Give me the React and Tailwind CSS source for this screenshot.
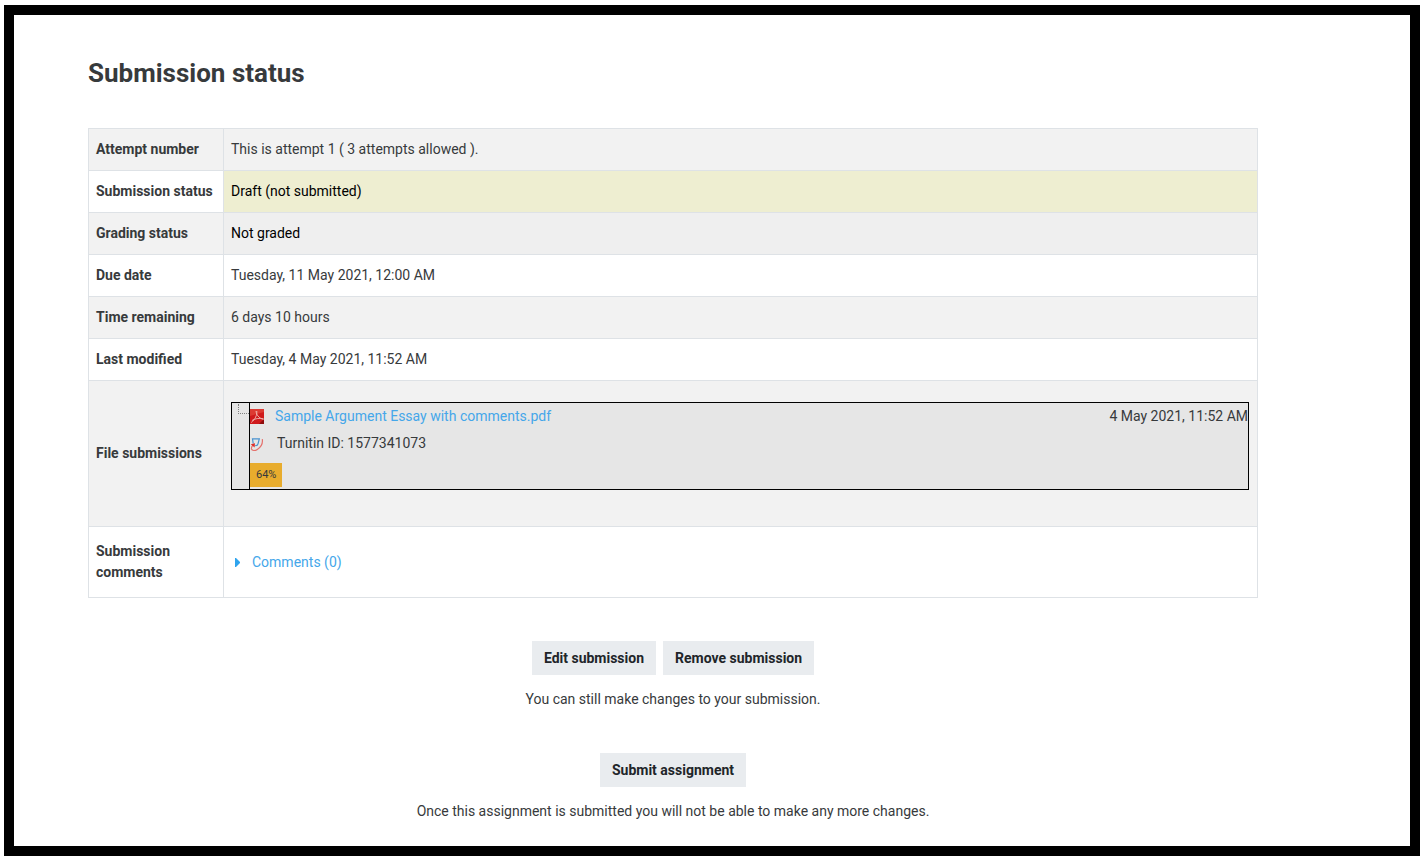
import React, { useState } from 'react';

const rows = [
    { label: 'Attempt number', value: 'This is attempt 1 ( 3 attempts allowed ).' },
    { label: 'Submission status', value: 'Draft (not submitted)', cell: 'bg-[#eeeed1] text-black' },
    { label: 'Grading status', value: 'Not graded', cell: 'bg-[#efefef] text-black' },
    { label: 'Due date', value: 'Tuesday, 11 May 2021, 12:00 AM' },
    { label: 'Time remaining', value: '6 days 10 hours' },
    { label: 'Last modified', value: 'Tuesday, 4 May 2021, 11:52 AM' },
];

const PdfIcon = () => (
    <svg className="h-4 w-4 shrink-0" viewBox="0 0 16 16" aria-hidden="true">
        <rect x="0" y="0" width="14" height="15" fill="#cf1a1c" />
        <path d="M0 0h14v3L0 7z" fill="#dc3a32" />
        <path d="M9 15l5-5v5z" fill="#8e0c0c" />
        <path d="M6 2c.3 3.500 2.500 7 7.500 8.500M6.800 2c.4 4-1.600 8.500-5.600 11.500M2 11.500c3-2 7-2.500 11.500-1.800" fill="none" stroke="#f0b5b0" strokeWidth="0.9" />
    </svg>
);

const TurnitinIcon = () => (
    <svg className="h-4 w-4 shrink-0" viewBox="0 0 16 16" aria-hidden="true">
        <path d="M3.200 7.500L2.500 2.800h6.800L8 7.800C7.600 9.300 6.800 9.800 5.200 9.500" fill="none" stroke="#4a93cf" strokeWidth="1.200" />
        <path d="M12.300 3.200c.6 4-1.200 7.800-5 10.200C5 15 2 14.800 1.500 13 1.200 11.700 2 10 3.300 8.800" fill="none" stroke="#e5716c" strokeWidth="1.200" />
        <path d="M.8 8.200l4.200-.9-.4 4.200z" fill="#df2f2a" />
    </svg>
);

const FileTree = () => (
    <div className="mt-[11px] mr-px mb-[26px] flex border border-black bg-[#e6e6e6]">
        <div className="flex w-[18px] shrink-0 justify-end border-r border-black">
            <div className="mt-px h-[10px] w-[11px] border-b border-l border-dotted border-[#808080]"></div>
        </div>
        <div className="flex-1">
            <div className="flex h-[27px] items-center">
                <PdfIcon />
                <a href="#file" className="ml-[9px] text-[#45a7ea]">Sample Argument Essay with comments.pdf</a>
                <span className="ml-auto">4 May 2021, 11:52 AM</span>
            </div>
            <div className="flex h-[27px] items-center">
                <TurnitinIcon />
                <span className="ml-[11px]">Turnitin ID: 1577341073</span>
            </div>
            <div className="flex pt-[6px] pb-[2px]">
                <span className="bg-[#e8ac2d] px-[6px] text-[11px] leading-6">64%</span>
            </div>
        </div>
    </div>
);

const ActionButton = ({ children }) => (
    <button type="button" className="h-[34px] cursor-pointer bg-[#e9ecef] px-3 font-bold text-[#212529]">{children}</button>
);

const App = () => {
    const [commentsOpen, setCommentsOpen] = useState(false);

    return (
        <div className="bg-white pt-[5px] pb-[6px] pl-1 font-['Roboto',sans-serif] text-[14px] leading-[21px] text-[#373a3c]">
            <main className="border-[10px] border-black pr-[152px] pb-6 pl-[74px]">
                <h2 className="pt-[42px] text-[26px] leading-8 font-bold">Submission status</h2>

                <table className="mt-[39px] w-full border-collapse">
                    <tbody>
                        {rows.map((row) => (
                            <tr key={row.label} className="odd:bg-[#f2f2f2]">
                                <th scope="row" className="w-[135px] border border-[#dee2e6] px-[7px] py-[10px] text-left font-bold whitespace-nowrap">{row.label}</th>
                                <td className={`border border-[#dee2e6] px-[7px] py-[10px] ${row.cell || ''}`}>{row.value}</td>
                            </tr>
                        ))}
                        <tr className="bg-[#f2f2f2]">
                            <th scope="row" className="border border-[#dee2e6] px-[7px] py-[10px] text-left font-bold">File submissions</th>
                            <td className="border border-[#dee2e6] px-[7px] py-[10px]"><FileTree /></td>
                        </tr>
                        <tr>
                            <th scope="row" className="border border-[#dee2e6] px-[7px] py-[14px] text-left font-bold">Submission comments</th>
                            <td className="border border-[#dee2e6] px-[7px] py-[10px]">
                                <button type="button" aria-expanded={commentsOpen} onClick={() => setCommentsOpen(!commentsOpen)} className="flex cursor-pointer items-center text-[#45a7ea]">
                                    <svg className="mr-3 ml-1 h-[9px] w-[5px]" viewBox="0 0 5 9" aria-hidden="true">
                                        <path d="M0 0h1l4 4v1L1 9H0z" fill="#2fa4ee" />
                                    </svg>
                                    Comments (0)
                                </button>
                            </td>
                        </tr>
                    </tbody>
                </table>

                <div className="mt-[43px] flex flex-col items-center">
                    <div className="flex gap-[7px]">
                        <ActionButton>Edit submission</ActionButton>
                        <ActionButton>Remove submission</ActionButton>
                    </div>
                    <p className="mt-[14px]">You can still make changes to your submission.</p>
                    <div className="mt-[43px]">
                        <ActionButton>Submit assignment</ActionButton>
                    </div>
                    <p className="mt-[14px]">Once this assignment is submitted you will not be able to make any more changes.</p>
                </div>
            </main>
        </div>
    );
};

export default App;
